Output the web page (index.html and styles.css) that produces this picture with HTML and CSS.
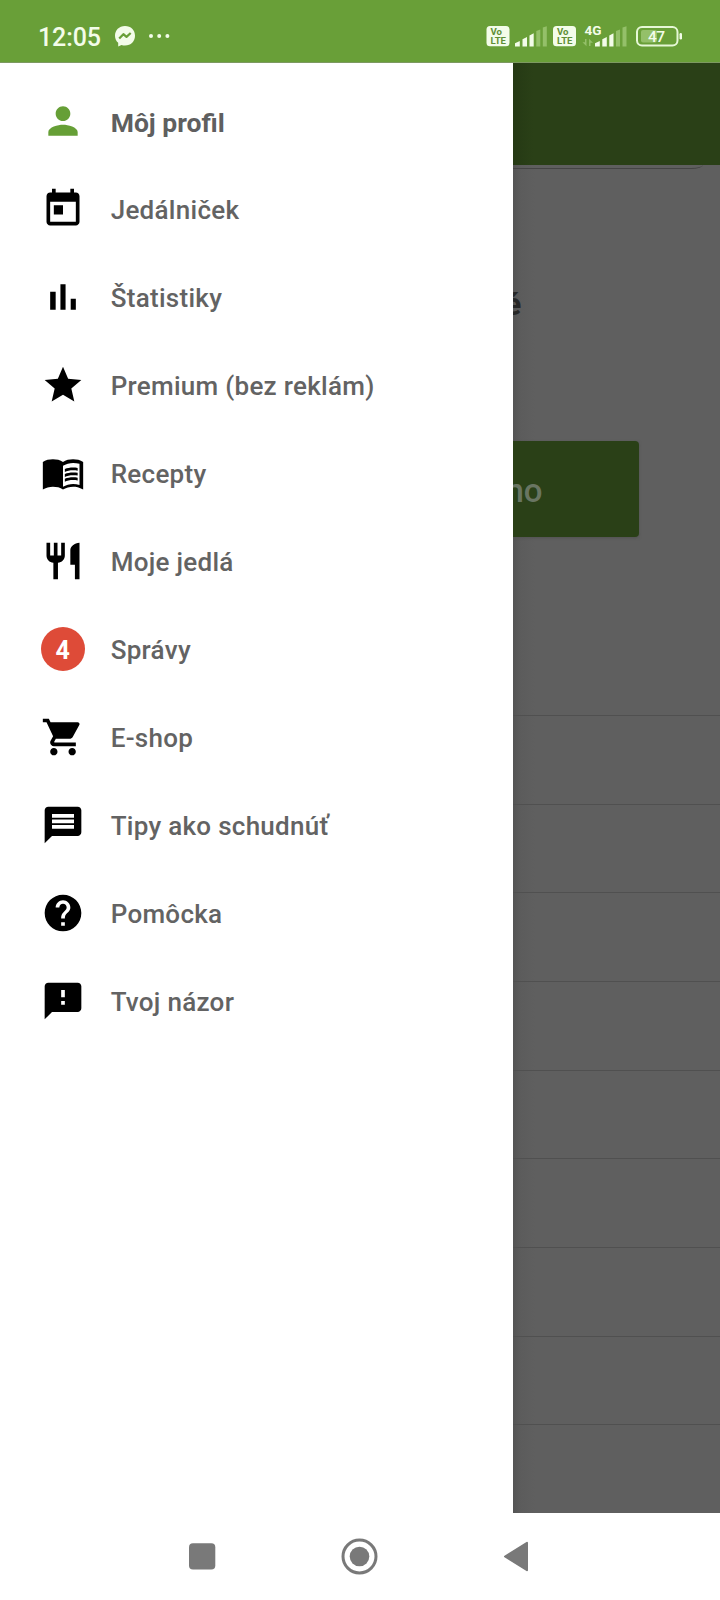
FILE: index.html
```html
<!DOCTYPE html>
<html lang="sk">
<head>
<meta charset="utf-8">
<title>Môj profil</title>
<link rel="stylesheet" href="styles.css">
</head>
<body>
<div class="phone">
  <header class="status">
    <span class="clock">12:05</span>
    <svg class="notices" width="60" height="24" viewBox="0 0 60 24">
      <path d="M12 2C6 2 2 6.300 2 11.700c0 2.900 1.200 5.400 3.200 7.100v3.600l3.300-1.500c1.100.4 2.300.6 3.500.6 6 0 10-4.300 10-9.800S18 2 12 2z"/>
      <path class="bolt" d="M6.200 14.600l4.200-4.400 3.100 2.700 4.200-3.900"/>
      <circle cx="38" cy="12" r="2"/><circle cx="46.200" cy="12" r="2"/><circle cx="54.400" cy="12" r="2"/>
    </svg>
    <svg class="signals" width="200" height="26" viewBox="0 0 200 26">
      <rect x="2.500" y="2" width="23" height="20.300" rx="3.500"/>
      <text class="volte" x="6.500" y="11.300" textLength="11.500" lengthAdjust="spacingAndGlyphs">Vo</text><text class="volte" x="6.500" y="19.500" textLength="15.500" lengthAdjust="spacingAndGlyphs">LTE</text>
      <path d="M31 22.500v-3.200l4.800-2.300v5.500zM38.500 22.500v-7.200l4.500-2.300v9.500zM45.500 22.500v-11l4.200-2.300v13.300z"/>
      <path class="dim" d="M52.300 22.500v-15.500l4-1.500v17zM58.800 22.500v-19l4-1.300v20.300z"/>
      <rect x="69" y="2" width="23" height="20.300" rx="3.500"/>
      <text class="volte" x="73" y="11.300" textLength="11.500" lengthAdjust="spacingAndGlyphs">Vo</text><text class="volte" x="73" y="19.500" textLength="15.500" lengthAdjust="spacingAndGlyphs">LTE</text>
      <text class="net" x="100.500" y="11" textLength="17" lengthAdjust="spacingAndGlyphs">4G</text>
      <path class="dim" d="M102.500 15v7.200l-4-4h2.500V15zM105 22v-7.200l4 4h-2.500V22z"/>
      <path d="M111 22.500v-3.200l4.800-2.300v5.500zM118.300 22.500v-7.200l4.500-2.300v9.500zM125.300 22.500v-11l4.200-2.300v13.300z"/>
      <path class="dim" d="M132 22.500v-15.500l4-1.500v17zM138.500 22.500v-19l4-1.300v20.300z"/>
      <rect class="dim" x="157" y="6" width="16" height="12.500" rx="2"/>
      <rect class="case" x="153" y="3" width="40.500" height="18.500" rx="5"/>
      <rect x="195.500" y="9" width="2.500" height="6.500" rx="1.200"/>
      <text class="level" x="164" y="17.800" textLength="17">47</text>
    </svg>
  </header>
  <main class="screen">
    <nav class="drawer">
      <a class="item current"><svg class="icon" viewBox="0 0 24 24"><path d="M12 12c2.210 0 4-1.790 4-4s-1.790-4-4-4-4 1.790-4 4 1.790 4 4 4zm0 2c-2.670 0-8 1.340-8 4v2h16v-2c0-2.660-5.330-4-8-4z"/></svg><span>Môj profil</span></a>
      <a class="item"><svg class="icon" viewBox="0 0 24 24"><path d="M19 3h-1V1h-2v2H8V1H6v2H5c-1.110 0-1.990.9-1.990 2L3 19c0 1.100.89 2 2 2h14c1.100 0 2-.9 2-2V5c0-1.100-.9-2-2-2zm0 16H5V8h14v11zM7 10h5v5H7z"/></svg><span>Jedálniček</span></a>
      <a class="item"><svg class="icon" viewBox="0 0 24 24"><path d="M5 9.200h3V19H5zM10.600 5h2.800v14h-2.800zm5.600 8H19v6h-2.800z"/></svg><span>Štatistiky</span></a>
      <a class="item"><svg class="icon" viewBox="0 0 24 24"><path d="M12 17.270L18.180 21l-1.640-7.030L22 9.240l-7.190-.61L12 2 9.190 8.630 2 9.240l5.460 4.730L5.820 21z"/></svg><span>Premium (bez reklám)</span></a>
      <a class="item"><svg class="icon" viewBox="0 0 24 24"><path d="M17.500 4.500c-1.950 0-4.050.4-5.500 1.500-1.450-1.100-3.550-1.500-5.500-1.500S2.450 4.900 1 6v15c1.350-.85 3.800-1.500 5.500-1.500 1.950 0 4.050.4 5.500 1.500 1.350-.85 3.800-1.500 5.500-1.500 1.650 0 3.350.3 5.500 1.500V6c-1.490-1.120-3.630-1.500-5.500-1.500zm3.500 14c-1.100-.35-2.300-.5-3.500-.5-1.700 0-4.150.65-5.500 1.500V8c1.350-.85 3.800-1.500 5.500-1.500 1.200 0 2.400.15 3.500.5v11.500z"/><path d="M17.500 10.500c.88 0 1.730.09 2.500.26V9.240c-.79-.15-1.640-.24-2.500-.24-1.700 0-3.240.29-4.500.83v1.660c1.130-.64 2.700-.99 4.500-.99zM13 12.490v1.660c1.130-.64 2.700-.99 4.500-.99.88 0 1.730.09 2.500.26V11.900c-.79-.15-1.640-.24-2.500-.24-1.700 0-3.240.3-4.500.83zM17.500 14.330c-1.700 0-3.240.29-4.500.83v1.660c1.130-.64 2.700-.99 4.500-.99.88 0 1.730.09 2.500.26v-1.520c-.79-.16-1.640-.24-2.500-.24z"/></svg><span>Recepty</span></a>
      <a class="item"><svg class="icon" viewBox="0 0 24 24"><path d="M11 9H9V2H7v7H5V2H3v7c0 2.120 1.660 3.840 3.750 3.970V22h2.500v-9.030C11.340 12.840 13 11.120 13 9V2h-2v7zm5-3v8h2.500v8H21V2c-2.760 0-5 2.240-5 4z"/></svg><span>Moje jedlá</span></a>
      <a class="item"><b class="count">4</b><span>Správy</span></a>
      <a class="item"><svg class="icon" viewBox="0 0 24 24"><path d="M7 18c-1.100 0-1.990.9-1.990 2S5.900 22 7 22s2-.9 2-2-.9-2-2-2zM1 2v2h2l3.600 7.590-1.350 2.450c-.16.28-.25.61-.25.96 0 1.100.9 2 2 2h12v-2H7.420c-.14 0-.25-.11-.25-.25l.03-.12.9-1.630h7.450c.75 0 1.410-.41 1.750-1.030l3.580-6.490c.08-.14.12-.31.12-.48 0-.55-.45-1-1-1H5.210l-.94-2H1zm16 16c-1.100 0-1.990.9-1.990 2s.89 2 1.990 2 2-.9 2-2-.9-2-2-2z"/></svg><span>E-shop</span></a>
      <a class="item"><svg class="icon" viewBox="0 0 24 24"><path d="M20 2H4c-1.100 0-1.990.9-1.990 2L2 22l4-4h14c1.100 0 2-.9 2-2V4c0-1.100-.9-2-2-2zM6 9h12v2H6V9zm12 5H6v-2h12v2zm0-6H6V6h12v2z"/></svg><span>Tipy ako schudnúť</span></a>
      <a class="item"><svg class="icon" viewBox="0 0 24 24"><path d="M12 2C6.480 2 2 6.480 2 12s4.480 10 10 10 10-4.480 10-10S17.520 2 12 2zm1 17h-2v-2h2v2zm2.070-7.750l-.9.920C13.450 12.900 13 13.500 13 15h-2v-.5c0-1.100.45-2.100 1.170-2.830l1.240-1.260c.37-.36.59-.86.59-1.410 0-1.100-.9-2-2-2s-2 .9-2 2H8c0-2.210 1.790-4 4-4s4 1.790 4 4c0 .88-.36 1.680-.93 2.250z"/></svg><span>Pomôcka</span></a>
      <a class="item"><svg class="icon" viewBox="0 0 24 24"><path d="M20 2H4c-1.100 0-1.990.9-1.990 2L2 22l4-4h14c1.100 0 2-.9 2-2V4c0-1.100-.9-2-2-2zm-7 12h-2v-2h2v2zm0-4h-2V6h2v4z"/></svg><span>Tvoj názor</span></a>
    </nav>
    <section class="page">
      <div class="appbar"></div>
      <div class="field"></div>
      <h1 class="title">é</h1>
      <div class="action">no</div>
      <div class="list">
        <div class="line"></div><div class="line"></div><div class="line"></div>
        <div class="line"></div><div class="line"></div><div class="line"></div>
        <div class="line"></div><div class="line"></div><div class="line"></div>
      </div>
    </section>
  </main>
  <footer class="keys">
    <svg width="720" height="87" viewBox="0 0 720 87">
      <rect x="189" y="30.300" width="26.300" height="26.300" rx="4"/>
      <circle class="ring" cx="359.500" cy="43.500" r="16.500"/><circle cx="359.500" cy="43.500" r="9.800"/>
      <path class="back" d="M505 43.500l22-13.700v27.400z"/>
    </svg>
  </footer>
</div>
</body>
</html>
```

FILE: styles.css
```css
* { box-sizing: border-box; }
body { margin: 0; font-family: Roboto, "Noto Sans", sans-serif; background: #fff; }
.phone { width: 720px; height: 1600px; display: flex; flex-direction: column; overflow: hidden; }

.status { height: 63px; background: #699f38; border-bottom: 1px solid #7d9961; display: flex; padding: 24px 36px 0 38px; color: #f3fce9; fill: #f3fce9; }
.clock { width: 75px; font-size: 25px; line-height: 27px; font-weight: 500; letter-spacing: -.1px; }
.notices { display: block; }
.bolt { fill: none; stroke: #699f38; stroke-width: 2.200; stroke-linejoin: round; }
.signals { margin-left: auto; display: block; overflow: visible; }
.volte { fill: #5f8f35; font-size: 8.800px; font-weight: 700; }
.net { font-size: 13.500px; font-weight: 700; }
.level { font-size: 15.500px; font-weight: 500; }
.dim { fill: #94c069; }
.case { fill: none; stroke: #e6f7d6; stroke-width: 2; }

.screen { height: 1450px; display: flex; }
.drawer { width: 513px; padding-top: 14px; background: #fff; }
.item { height: 88px; display: flex; align-items: center; padding-left: 40.600px; gap: 26.100px; color: #636363; font-size: 26px; font-weight: 500; letter-spacing: .28px; }
.item span { padding-top: 2px; }
.icon { width: 44px; height: 44px; fill: #000; }
.current { color: #5f5f5f; font-size: 26.500px; font-weight: 700; letter-spacing: 0; }
.current .icon { fill: #669f36; }
.count { width: 44px; height: 44px; border-radius: 50%; background: #de4b38; color: #fff; font-size: 25px; line-height: 47px; text-align: center; letter-spacing: 0; }

.page { width: 207px; background: linear-gradient(90deg, #545454, #5c5c5c 8px, #5f5f5f 22px); overflow: hidden; }
.appbar { height: 102px; background: linear-gradient(90deg, #253914, #2a4017 20px); }
.field { width: 190px; height: 4px; border-bottom: 1px solid #454545; border-bottom-right-radius: 12px 4px; }
.title { margin: 113px 0 0 -9px; font-size: 32px; line-height: 44px; height: 44px; font-weight: 700; color: #262626; }
.action { width: 126px; height: 96px; margin-top: 115px; text-indent: -7.500px; background: #2a4017; border-radius: 0 4px 4px 0; box-shadow: 0 1px 3px #525252; color: #697562; font-size: 33px; font-weight: 500; line-height: 99px; }
.list { margin-top: 178px; }
.line { height: 88.670px; border-top: 1px solid #505050; }

.keys { height: 87px; fill: #797979; }
.keys svg { display: block; }
.ring { fill: none; stroke: #797979; stroke-width: 3; }
.back { stroke: #797979; stroke-width: 2; stroke-linejoin: round; }
```
